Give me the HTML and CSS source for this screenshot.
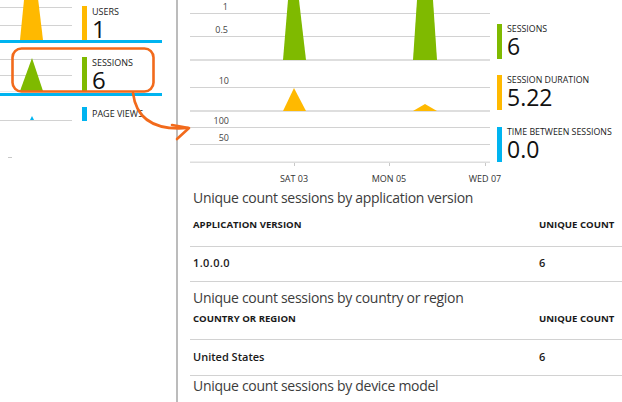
FILE: index.html
```html
<!DOCTYPE html>
<html lang="en">
<head>
<meta charset="utf-8">
<title>Sessions</title>
<link rel="stylesheet" href="styles.css">
</head>
<body>
<div class="page">
  <aside class="left">
    <div class="tile tile-users">
      <svg class="spark" width="72" height="50" viewBox="0 0 72 50">
        <line class="grid" x1="0" y1="17.5" x2="72" y2="17.5"/>
        <line class="grid" x1="0" y1="35.5" x2="72" y2="35.5"/>
        <polygon points="20,50 25,0 37,0 43,50" fill="#ffb900"/>
      </svg>
      <div class="kpi kpi-yellow">
        <div class="kpi-label">USERS</div>
        <div class="kpi-value">1</div>
      </div>
    </div>
    <div class="sep"></div>
    <div class="tile tile-sessions">
      <svg class="spark" width="72" height="50" viewBox="0 0 72 50">
        <line class="grid" x1="0" y1="16.5" x2="72" y2="16.5"/>
        <line class="grid" x1="0" y1="32.5" x2="72" y2="32.5"/>
        <line class="grid-faint" x1="0" y1="48.5" x2="60" y2="48.5"/>
        <polygon points="20,48 32,15 43,48" fill="#7fba00"/>
      </svg>
      <div class="kpi kpi-green">
        <div class="kpi-label">SESSIONS</div>
        <div class="kpi-value">6</div>
      </div>
    </div>
    <div class="sep"></div>
    <div class="tile tile-views">
      <svg class="spark" width="72" height="28" viewBox="0 0 72 28">
        <line class="grid" x1="0" y1="24.5" x2="72" y2="24.5"/>
        <polygon points="30,24 32,20 34,24" fill="#00b4f0"/>
      </svg>
      <div class="kpi kpi-blue kpi-short">
        <div class="kpi-label">PAGE VIEWS</div>
      </div>
    </div>
    <div class="dash"></div>
  </aside>
  <div class="divider"></div>
  <main class="right">
    <div class="chart-row">
      <svg class="chart" width="300" height="61" viewBox="0 0 300 61">
        <line class="grid" x1="0" y1="13.5" x2="300" y2="13.5"/>
        <line class="grid" x1="0" y1="36.5" x2="300" y2="36.5"/>
        <rect class="base" x="0" y="59" width="300" height="2"/>
        <text class="ylab" x="38" y="10">1</text>
        <text class="ylab" x="38" y="33">0.5</text>
        <polygon points="93,60 98,0 109,0 116,60" fill="#7fba00"/>
        <polygon points="223,60 227,0 243,0 247,60" fill="#7fba00"/>
      </svg>
      <div class="metric metric-green">
        <div class="metric-label">SESSIONS</div>
        <div class="metric-value">6</div>
      </div>
    </div>
    <div class="chart-row">
      <svg class="chart" width="300" height="51" viewBox="0 0 300 51">
        <line class="grid" x1="0" y1="26.5" x2="300" y2="26.5"/>
        <rect class="base" x="0" y="49" width="300" height="2"/>
        <text class="ylab" x="39" y="23">10</text>
        <polygon points="93,50 104,27 116,50" fill="#ffb900"/>
        <polygon points="223,50 235,43 247,50" fill="#ffb900"/>
      </svg>
      <div class="metric metric-yellow">
        <div class="metric-label">SESSION DURATION</div>
        <div class="metric-value">5.22</div>
      </div>
    </div>
    <div class="chart-row">
      <svg class="chart" width="300" height="51" viewBox="0 0 300 51">
        <line class="grid" x1="0" y1="15.5" x2="300" y2="15.5"/>
        <line class="grid" x1="0" y1="32.5" x2="300" y2="32.5"/>
        <rect class="base" x="0" y="49.5" width="300" height="1.5"/>
        <text class="ylab" x="39" y="12">100</text>
        <text class="ylab" x="39" y="29">50</text>
      </svg>
      <div class="metric metric-blue metric-last">
        <div class="metric-label">TIME BETWEEN SESSIONS</div>
        <div class="metric-value">0.0</div>
      </div>
    </div>
    <svg class="xaxis" width="300" height="22" viewBox="0 0 300 22">
      <line class="tick" x1="104.5" y1="0" x2="104.5" y2="3"/>
      <line class="tick" x1="199.5" y1="0" x2="199.5" y2="3"/>
      <line class="tick" x1="295.5" y1="0" x2="295.5" y2="3"/>
      <text class="xlab" x="104" y="19">SAT 03</text>
      <text class="xlab" x="199" y="19">MON 05</text>
      <text class="xlab" x="295" y="19">WED 07</text>
    </svg>

    <section class="tbl tbl-1">
      <h2 class="tbl-title">Unique count sessions by application version</h2>
      <div class="tbl-head"><span>APPLICATION VERSION</span><span>UNIQUE COUNT</span></div>
      <div class="tbl-row"><span class="ver">1.0.0.0</span><span>6</span></div>
    </section>
    <section class="tbl tbl-2">
      <h2 class="tbl-title">Unique count sessions by country or region</h2>
      <div class="tbl-head"><span>COUNTRY OR REGION</span><span>UNIQUE COUNT</span></div>
      <div class="tbl-row"><span>United States</span><span>6</span></div>
    </section>
    <section class="tbl tbl-3">
      <h2 class="tbl-title">Unique count sessions by device model</h2>
    </section>
  </main>
</div>
<svg class="callout" width="622" height="402" viewBox="0 0 622 402">
  <rect x="12.5" y="48.5" width="141" height="43" rx="9" ry="9"/>
  <path d="M133,93 C136,117 152,131 188,128"/>
  <path d="M172,125 L189,128 L177,139"/>
</svg>
</body>
</html>
```

FILE: styles.css
```css
* { box-sizing: border-box; }
html, body { margin: 0; padding: 0; }
body {
  width: 622px;
  height: 402px;
  overflow: hidden;
  position: relative;
  background: #ffffff;
  font-family: "Open Sans", "Noto Sans", sans-serif;
  color: #1e1e1e;
}
.page { display: flex; height: 402px; }

/* left column */
.left { width: 176px; flex: none; }
.tile { display: flex; align-items: flex-end; height: 50px; }
.tile-users { margin-top: -10px; }
.tile-sessions { padding-bottom: 2px; }
.tile-views { height: 28px; align-items: flex-start; }
.spark { flex: none; display: block; }
.tile-sessions .spark { margin-bottom: -2px; }
.grid { stroke: #d2d2d2; stroke-width: 1; }
.grid-faint { stroke: #ececec; stroke-width: 1; }
.sep { width: 162px; height: 3px; background: #00b4f0; }
.kpi {
  margin-left: 10px;
  height: 34px;
  border-left: 5px solid;
  padding-left: 5px;
  display: flex;
  flex-direction: column;
}
.kpi-yellow { border-color: #ffb900; }
.kpi-green { border-color: #7fba00; }
.kpi-blue { border-color: #00b4f0; }
.kpi-short { height: 14px; margin-top: 11px; }
.kpi-label { font-size: 9px; line-height: 11px; color: #222; white-space: nowrap; }
.kpi-short .kpi-label { margin-top: 1px; }
.kpi-value { font-size: 24px; line-height: 23px; color: #111; }
.dash { width: 4px; height: 1px; background: #c8c8c8; margin: 33px 0 0 8px; }

.divider { width: 2px; flex: none; background: #bcbcbc; }

/* right column */
.right { flex: 1; min-width: 0; display: flex; flex-direction: column; padding-left: 12px; }
.chart-row { display: flex; align-items: flex-end; gap: 7px; }
.chart { display: block; flex: none; overflow: visible; }
.base { fill: #dedede; }
.ylab { font-size: 9px; fill: #444; text-anchor: end; font-family: "Open Sans", "Noto Sans", sans-serif; }
.metric {
  height: 35px;
  margin-bottom: 2px;
  border-left: 5px solid;
  padding-left: 5px;
  display: flex;
  flex-direction: column;
  white-space: nowrap;
}
.metric-last { margin-bottom: 1px; }
.metric-green { border-color: #7fba00; }
.metric-yellow { border-color: #ffb900; }
.metric-blue { border-color: #00b4f0; }
.metric-label { font-size: 8.8px; line-height: 11px; color: #222; }
.metric-value { font-size: 23px; line-height: 23px; color: #111; }

.xaxis { display: block; overflow: visible; }
.tick { stroke: #c8c8c8; stroke-width: 1; }
.xlab { font-size: 9px; fill: #333; text-anchor: middle; font-family: "Open Sans", "Noto Sans", sans-serif; }

/* tables */
.tbl-1 { margin-top: 3px; }
.tbl-2 { margin-top: 6px; }
.tbl-title {
  margin: 0;
  padding-left: 3px;
  font-size: 14px;
  line-height: 20px;
  font-weight: 400;
  letter-spacing: -0.3px;
  color: #3c3c3c;
  white-space: nowrap;
}
.tbl-head, .tbl-row {
  display: grid;
  grid-template-columns: 346px 1fr;
  padding-left: 3px;
  border-bottom: 1px solid #d2d2d2;
  white-space: nowrap;
}
.tbl-head { font-size: 9.6px; line-height: 12px; font-weight: 700; color: #1a1a1a; }
.tbl-1 .tbl-head { padding-top: 11px; padding-bottom: 15px; }
.tbl-2 .tbl-head { padding-top: 5px; padding-bottom: 14px; }
.tbl-row { font-size: 11px; line-height: 14px; font-weight: 600; color: #1a1a1a; padding-top: 9px; padding-bottom: 11px; }
.ver { letter-spacing: 0.4px; }
.tbl-2 .tbl-row { padding-top: 10px; padding-bottom: 11px; }

/* callout overlay */
.callout { position: absolute; left: 0; top: 0; pointer-events: none; }
.callout rect, .callout path {
  fill: none;
  stroke: #f26a1b;
  stroke-width: 2.6;
  stroke-linecap: round;
  stroke-linejoin: round;
}
```
